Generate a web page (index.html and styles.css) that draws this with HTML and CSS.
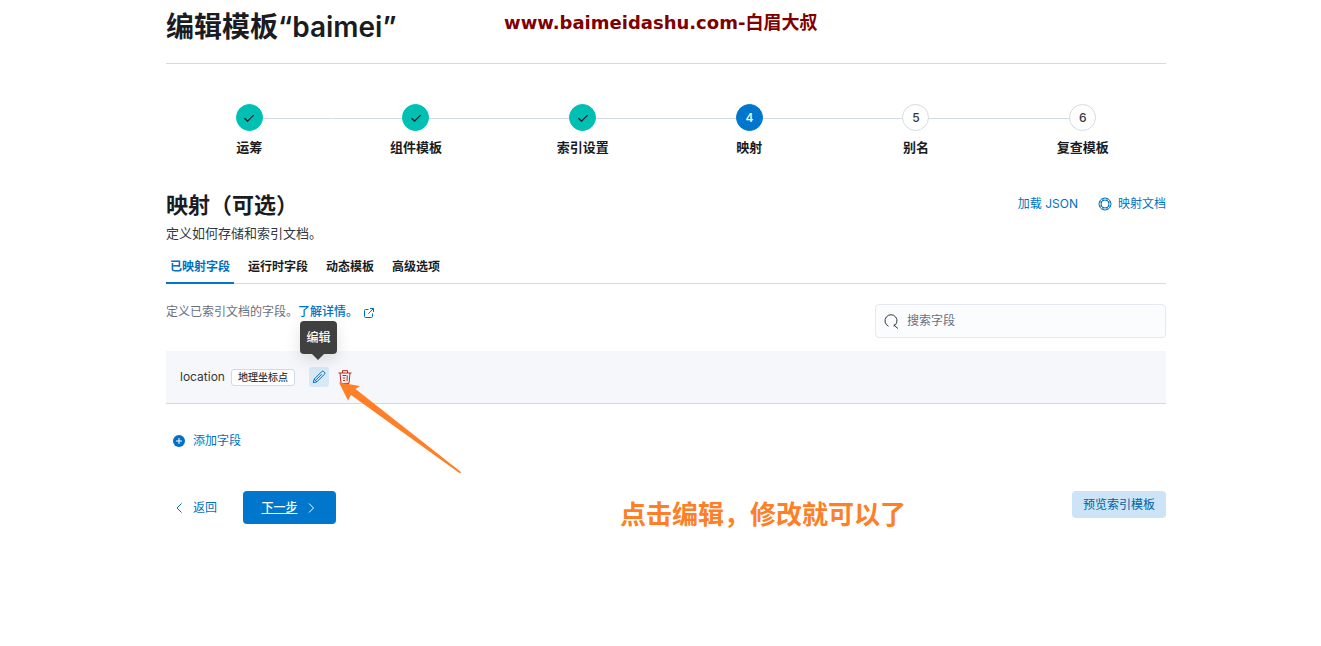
FILE: index.html
```html
<!DOCTYPE html>
<html lang="zh-CN">
<head>
    <meta charset="UTF-8">
    <meta name="viewport" content="width=device-width, initial-scale=1.0">
    <title>编辑模板“baimei”</title>
    <link rel="stylesheet" href="styles.css">
</head>
<body>
    <div class="page">
        <header class="page-header">
            <h1>编辑模板“baimei”</h1>
        </header>

        <ol class="steps">
            <li class="step done">
                <span class="circle"><svg width="14" height="14" viewBox="0 0 14 14"><path d="M2.5 7.3l3 2.8 6.2-6"/></svg></span>
                <span class="step-title">运筹</span>
            </li>
            <li class="step done">
                <span class="circle"><svg width="14" height="14" viewBox="0 0 14 14"><path d="M2.5 7.3l3 2.8 6.2-6"/></svg></span>
                <span class="step-title">组件模板</span>
            </li>
            <li class="step done">
                <span class="circle"><svg width="14" height="14" viewBox="0 0 14 14"><path d="M2.5 7.3l3 2.8 6.2-6"/></svg></span>
                <span class="step-title">索引设置</span>
            </li>
            <li class="step current">
                <span class="circle">4</span>
                <span class="step-title">映射</span>
            </li>
            <li class="step">
                <span class="circle">5</span>
                <span class="step-title">别名</span>
            </li>
            <li class="step">
                <span class="circle">6</span>
                <span class="step-title">复查模板</span>
            </li>
        </ol>

        <div class="section-header">
            <div>
                <h2>映射（可选）</h2>
                <p class="subtitle">定义如何存储和索引文档。</p>
            </div>
            <div class="section-links">
                <button type="button" class="link-button">加载 JSON</button>
                <a href="#docs" class="docs-link">
                    <svg width="14" height="14" viewBox="0 0 14 14" class="line-icon">
                        <circle cx="7" cy="7" r="6"/>
                        <circle cx="7" cy="7" r="4"/>
                        <path d="M5 1v3M9 1v3M5 10v3M9 10v3M1 5h3M1 9h3M10 5h3M10 9h3"/>
                    </svg>
                    映射文档
                </a>
            </div>
        </div>

        <div class="tabs" role="tablist">
            <button type="button" role="tab" class="tab active" aria-selected="true">已映射字段</button>
            <button type="button" role="tab" class="tab">运行时字段</button>
            <button type="button" role="tab" class="tab">动态模板</button>
            <button type="button" role="tab" class="tab">高级选项</button>
        </div>

        <div class="toolbar">
            <p class="hint">定义已索引文档的字段。<a href="#more">了解详情。<svg width="10" height="10" viewBox="0 0 10 10" class="line-icon"><path d="M4.5 1.5h-3a1 1 0 0 0-1 1v6a1 1 0 0 0 1 1h6a1 1 0 0 0 1-1v-3M6 .5h3.5V4M9.3.7L4.3 5.7"/></svg></a></p>
            <div class="search">
                <svg width="15" height="15" viewBox="0 0 15 15"><path d="M4.500 12.200a6 6 0 1 1 5 0M10.400 10.200v1.500l3.600 2.800"/></svg>
                <input type="search" placeholder="搜索字段" aria-label="搜索字段">
            </div>
        </div>

        <div class="field">
            <span class="field-name">location</span>
            <span class="badge">地理坐标点</span>
            <button type="button" class="icon-button edit" aria-label="编辑">
                <svg width="14" height="14" viewBox="0 0 14 14" class="line-icon"><path d="M1.3 12.7l.9-3.6 7.5-7.5a1.5 1.5 0 0 1 2.1 0l.6.6a1.5 1.5 0 0 1 0 2.1l-7.5 7.5zM2.2 9.1l2.7 2.7M4 9.9l5.7-5.7"/></svg>
                <span class="tooltip" role="tooltip">编辑</span>
            </button>
            <button type="button" class="icon-button delete" aria-label="删除">
                <svg width="14" height="14" viewBox="0 0 14 14" class="line-icon"><path d="M.5 3h13M4.500 3V.6h5V3M2 3l1 10.400h8L12 3M4.600 5.500h3.800M4.800 8h2.400M5 10.500h2M9.300 5.500L9 11"/></svg>
            </button>
        </div>

        <button type="button" class="link-button add-field">
            <svg width="12" height="12" viewBox="0 0 12 12"><circle cx="6" cy="6" r="6"/><path d="M6 3v6M3 6h6"/></svg>
            添加字段
        </button>

        <div class="footer">
            <button type="button" class="link-button back">
                <svg width="12" height="12" viewBox="0 0 12 12" class="line-icon"><path d="M8.500 1.500L4 6l4.500 4.500"/></svg>
                返回
            </button>
            <button type="button" class="next">
                <span>下一步</span>
                <svg width="12" height="12" viewBox="0 0 12 12" class="line-icon"><path d="M3 1.500L7.500 6 3 10.500"/></svg>
            </button>
            <button type="button" class="preview">预览索引模板</button>
        </div>

        <!-- notes on top of the page -->
        <div class="watermark">www.baimeidashu.com-白眉大叔</div>
        <svg class="arrow" width="122" height="92" viewBox="0 0 122 92"><path d="M0 .5L21 4l-4.500 3L122 90l-1 1.500L12 13l-3 5.500z"/></svg>
        <div class="note">点击编辑，修改就可以了</div>
    </div>
</body>
</html>
```
FILE: styles.css
```css
* {
    box-sizing: border-box;
}

body {
    margin: 0;
    padding: 0 155px 0 166px;
    background-color: #fff;
    color: #343741;
    font-family: Inter, "Noto Sans CJK SC", sans-serif;
    font-size: 12px;
    line-height: 20px;
}

h1, h2, p, ol {
    margin: 0;
    padding: 0;
}

a {
    color: #0071c2;
    text-decoration: none;
}

button {
    padding: 0;
    border: none;
    background: none;
    font: inherit;
    cursor: pointer;
}

.line-icon {
    fill: none;
    stroke: currentColor;
}

.page {
    position: relative;
    min-height: 100vh;
}

.page-header {
    height: 64px;
    padding-top: 8px;
    border-bottom: 1px solid #d3dae6;
}

h1 {
    color: #1a1c21;
    font-size: 28px;
    font-weight: 600;
    line-height: 38px;
}

/* Steps */
.steps {
    display: grid;
    grid-template-columns: repeat(6, 1fr);
    padding-top: 40px;
    list-style: none;
}

.step {
    display: flex;
    flex-direction: column;
    align-items: center;
    gap: 6px;
    background: linear-gradient(#d3dae6, #d3dae6) 0 14px / 100% 1px no-repeat;
}

.step:first-child {
    background-position: 100% 14px;
    background-size: 50% 1px;
}

.step:last-child {
    background-size: 50% 1px;
}

.circle {
    display: flex;
    align-items: center;
    justify-content: center;
    width: 27px;
    height: 27px;
    border: 1px solid #d3dae6;
    border-radius: 50%;
    background-color: #fff;
    font-weight: 500;
}

.done .circle {
    border-color: #00bfb3;
    background-color: #00bfb3;
}

.circle svg {
    fill: none;
    stroke: #1a1c21;
    stroke-width: 1.3;
}

.current .circle {
    border-color: #0077cc;
    background-color: #0077cc;
    color: #fff;
}

.step-title {
    color: #1a1c21;
    font-size: 13px;
    font-weight: 600;
}

/* Section title and links */
.section-header {
    display: flex;
    justify-content: space-between;
    padding-top: 34px;
}

h2 {
    color: #1a1c21;
    font-size: 22px;
    line-height: 28px;
}

.subtitle {
    font-size: 13px;
    line-height: 28px;
}

.section-links {
    display: flex;
    align-items: center;
    gap: 20px;
    height: 26px;
}

.link-button {
    color: #0071c2;
}

.docs-link {
    display: flex;
    align-items: center;
    gap: 6px;
}

/* Tabs */
.tabs {
    display: flex;
    gap: 10px;
    box-shadow: inset 0 -1px 0 #d3dae6;
}

.tab {
    height: 37px;
    padding: 4px 4px 2px;
    color: #1a1c21;
    font-weight: 600;
}

.tab.active {
    color: #0071c2;
    box-shadow: inset 0 -2px 0 #0077cc;
}

/* Search */
.toolbar {
    display: flex;
    justify-content: space-between;
    padding-top: 20px;
}

.hint {
    margin-top: -2px;
    color: #69707d;
}

.hint a {
    font-weight: 500;
}

.hint svg {
    margin-left: 6px;
    vertical-align: -2px;
}

.search {
    display: flex;
    align-items: center;
    gap: 8px;
    width: 291px;
    height: 34px;
    padding: 0 8px;
    border: 1px solid #e6e8f2;
    border-radius: 4px;
    background-color: #fbfcfd;
}

.search svg {
    fill: none;
    stroke: #343741;
}

.search input {
    flex: 1;
    padding: 0;
    border: none;
    outline: none;
    background: none;
    color: #343741;
    font: inherit;
}

.search input::placeholder {
    color: #69707d;
}

/* Mapped field */
.field {
    display: flex;
    align-items: center;
    height: 53px;
    margin-top: 13px;
    padding: 0 14px;
    border-bottom: 1px solid #d3dae6;
    background-color: #f5f7fa;
}

.badge {
    margin: 0 14px 0 6px;
    padding: 0 6px;
    border: 1px solid #d3dae6;
    border-radius: 3px;
    background-color: #fff;
    font-size: 10px;
    font-weight: 500;
    line-height: 15px;
}

.icon-button {
    position: relative;
    display: flex;
    align-items: center;
    justify-content: center;
    width: 20px;
    height: 20px;
    border-radius: 3px;
}

.edit {
    margin-right: 6px;
    background-color: #d9e8f5;
    color: #0071c2;
}

.delete {
    color: #bd271e;
}

.tooltip {
    position: absolute;
    bottom: 33px;
    left: 50%;
    width: 37px;
    margin-left: -19px;
    border-radius: 4px;
    background-color: #404040;
    box-shadow: 0 6px 16px rgba(0, 0, 0, 0.12);
    color: #fff;
    font-weight: 500;
    line-height: 33px;
    text-align: center;
}

.tooltip::after {
    content: "";
    position: absolute;
    top: 100%;
    left: 50%;
    margin-left: -6px;
    border: 6px solid transparent;
    border-top-color: #404040;
    border-bottom: none;
}

.add-field {
    display: flex;
    align-items: center;
    gap: 8px;
    margin: 27px 0 0 7px;
}

.add-field circle {
    fill: #0071c2;
}

.add-field path {
    stroke: #fff;
}

/* Bottom buttons */
.footer {
    display: flex;
    align-items: flex-start;
    padding-top: 40px;
}

.back {
    display: flex;
    align-items: center;
    gap: 8px;
    height: 33px;
    margin: 0 26px 0 7px;
}

.next {
    display: flex;
    align-items: center;
    justify-content: center;
    gap: 8px;
    width: 93px;
    height: 33px;
    border-radius: 4px;
    background-color: #0077cc;
    color: #fff;
    font-weight: 500;
}

.next span {
    text-decoration: underline;
}

.preview {
    height: 27px;
    margin-left: auto;
    padding: 0 11px;
    border-radius: 4px;
    background-color: #cce4f5;
    color: #0061a6;
}

/* Notes */
.watermark {
    position: absolute;
    top: 8px;
    left: 338px;
    color: #800000;
    font-family: "DejaVu Sans", "Noto Sans CJK SC", sans-serif;
    font-size: 18px;
    font-weight: 700;
    line-height: 30px;
}

.arrow {
    position: absolute;
    top: 382px;
    left: 173px;
    fill: #ff7f27;
}

.note {
    position: absolute;
    top: 496px;
    left: 454px;
    color: #ff7f27;
    font-size: 26px;
    font-weight: 700;
    line-height: 38px;
}
```
